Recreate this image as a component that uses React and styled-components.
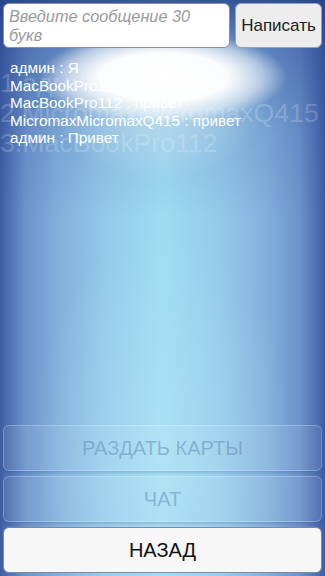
import React from "react";
import styled, { createGlobalStyle } from "styled-components";

const Global = createGlobalStyle`
  html, body { margin: 0; padding: 0; width: 325px; height: 576px; overflow: hidden; }
  #root { width: 325px; height: 576px; }
  * { box-sizing: border-box; }
`;

const Screen = styled.div`
  position: relative;
  width: 325px;
  height: 576px;
  display: flex;
  flex-direction: column;
  font-family: "Liberation Sans", Arial, sans-serif;
  overflow: hidden;
  background:
    radial-gradient(ellipse 124px 46px at 163px 77px, rgba(255,255,255,1) 0%, rgba(255,255,255,0.96) 52%, rgba(255,255,255,0.5) 80%, rgba(255,255,255,0) 100%),
    radial-gradient(ellipse 110px 85px at 160px 96px, rgba(255,255,255,0.45) 0%, rgba(255,255,255,0) 100%),
    linear-gradient(to bottom, rgba(36,64,140,0.85) 0px, rgba(36,64,140,0.4) 50px, rgba(36,64,140,0.12) 130px, rgba(36,64,140,0) 220px),
    radial-gradient(ellipse 130px 220px at 50% 78%, rgba(182,231,247,0.45) 0%, rgba(182,231,247,0) 100%),
    linear-gradient(to right, #3d5da0 0%, #5173b5 3%, #6d95cc 8%, #82b0dc 18%, #93c9ea 32%, #a0dcf2 50%, #93c9ea 68%, #82b0dc 82%, #6d95cc 92%, #5173b5 97%, #3d5da0 100%);
`;

const TopBar = styled.div`
  display: flex;
  gap: 5px;
  padding: 3px 3px 0 3px;
  height: 51px;
`;

const Input = styled.div`
  flex: 0 0 227px;
  height: 45px;
  background: #fff;
  border: 1px solid #8a8f99;
  border-radius: 6px;
  padding: 3px 5px;
  font-size: 16.3px;
  line-height: 19px;
  font-style: italic;
  color: #9a9a9a;
`;

const SendButton = styled.div`
  flex: 1;
  height: 45px;
  background: #ededed;
  border: 1px solid #9aa0aa;
  border-radius: 6px;
  display: flex;
  align-items: center;
  justify-content: center;
  font-size: 17px;
  color: #222;
`;

const ChatArea = styled.div`
  position: relative;
  flex: 1;
`;

const Players = styled.div`
  position: absolute;
  left: 0;
  top: 17px;
  font-size: 26.7px;
  line-height: 30px;
  color: rgba(255,255,255,0.2);
  white-space: nowrap;
`;

const Messages = styled.div`
  position: relative;
  padding: 8px 0 0 10px;
  font-size: 15.3px;
  line-height: 17.6px;
  color: #fff;
  white-space: nowrap;
`;

const Actions = styled.div`
  display: flex;
  flex-direction: column;
  gap: 5px;
  padding: 0 3px 3px 3px;
`;

const ActionButton = styled.div`
  height: 46px;
  border-radius: 6px;
  display: flex;
  align-items: center;
  justify-content: center;
  font-size: 20px;
  border: 1px solid ${p => (p.$primary ? "#7a8aa8" : "rgba(255,255,255,0.25)")};
  background: ${p => (p.$primary ? "#f7f7f7" : "rgba(255,255,255,0.07)")};
  color: ${p => (p.$primary ? "#111" : "rgba(95,135,180,0.5)")};
  box-shadow: ${p => (p.$primary ? "none" : "0 2px 3px rgba(40,70,140,0.22)")};
`;

const messages = [
  "админ : Я",
  "MacBookPro112 : кто раздает?",
  "MacBookPro112 : привет",
  "MicromaxMicromaxQ415 : привет",
  "админ : Привет",
];

const players = ["1.админ", "2.MicromaxMicromaxQ415", "3.MacBookPro112"];

export default function App() {
  return (
    <>
      <Global />
      <Screen>
        <TopBar>
          <Input>Введите сообщение 30 букв</Input>
          <SendButton>Написать</SendButton>
        </TopBar>
        <ChatArea>
          <Players>
            {players.map(p => (
              <div key={p}>{p}</div>
            ))}
          </Players>
          <Messages>
            {messages.map((m, i) => (
              <div key={i}>{m}</div>
            ))}
          </Messages>
        </ChatArea>
        <Actions>
          <ActionButton>РАЗДАТЬ КАРТЫ</ActionButton>
          <ActionButton>ЧАТ</ActionButton>
          <ActionButton $primary>НАЗАД</ActionButton>
        </Actions>
      </Screen>
    </>
  );
}
